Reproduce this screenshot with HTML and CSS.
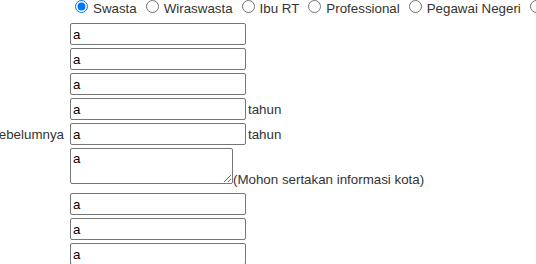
FILE: index.html
```html
<!DOCTYPE html>
<html lang="id">
<head>
<meta charset="utf-8">
<title>Form</title>
<link rel="stylesheet" href="styles.css">
</head>
<body>
<form class="form">
  <div class="label"></div>
  <div class="field radios">
    <label class="opt"><input type="radio" name="job" checked>Swasta</label>
    <label class="opt"><input type="radio" name="job">Wiraswasta</label>
    <label class="opt"><input type="radio" name="job">Ibu RT</label>
    <label class="opt"><input type="radio" name="job">Professional</label>
    <label class="opt"><input type="radio" name="job">Pegawai Negeri</label>
    <label class="opt"><input type="radio" name="job">Lainnya</label>
  </div>

  <div class="label"></div>
  <div class="field"><input class="text" type="text" value="a"></div>

  <div class="label"></div>
  <div class="field"><input class="text" type="text" value="a"></div>

  <div class="label"></div>
  <div class="field"><input class="text" type="text" value="a"></div>

  <div class="label"></div>
  <div class="field"><input class="text" type="text" value="a"><span class="unit">tahun</span></div>

  <div class="label"><span>Lama Bekerja di Perusahaan Sebelumnya</span></div>
  <div class="field"><input class="text" type="text" value="a"><span class="unit">tahun</span></div>

  <div class="label"></div>
  <div class="field area-row"><textarea class="area">a</textarea><span class="note">(Mohon sertakan informasi kota)</span></div>

  <div class="label"></div>
  <div class="field"><input class="text" type="text" value="a"></div>

  <div class="label"></div>
  <div class="field"><input class="text" type="text" value="a"></div>

  <div class="label"></div>
  <div class="field"><input class="text" type="text" value="a"></div>

  <div class="label"></div>
  <div class="field"><input class="text" type="text" value="a"></div>
</form>
</body>
</html>
```
FILE: styles.css
```css
html, body {
  margin: 0;
  padding: 0;
  overflow: hidden;
  background: #fff;
}

body {
  font-family: "Liberation Sans", Arial, sans-serif;
  font-size: 13.333px;
  color: #333;
}

.form {
  display: grid;
  grid-template-columns: 66px auto;
  column-gap: 4px;
  row-gap: 3px;
  margin-top: -3px;
}

.label {
  display: flex;
  justify-content: flex-end;
  align-items: center;
  overflow: hidden;
  white-space: nowrap;
  padding-right: 2px;
}

.field {
  display: flex;
  align-items: center;
  white-space: nowrap;
}

.radios {
  padding-bottom: 4px;
  align-items: baseline;
}

.opt {
  display: inline-flex;
  align-items: baseline;
  margin-right: 4px;
}

.opt input {
  margin: 3px 5px 0 5px;
  flex: none;
}

.text {
  box-sizing: border-box;
  width: 176px;
  height: 22px;
  margin: 0;
  padding: 1px 2px;
  border: 1px solid #767676;
  border-radius: 2px;
  font-family: "Liberation Sans", Arial, sans-serif;
  font-size: 13.333px;
  color: #000;
  background: #fff;
}

.unit {
  margin-left: 2px;
}

.area-row {
  align-items: flex-end;
  padding-bottom: 6px;
}

.area {
  box-sizing: border-box;
  width: 163px;
  height: 36px;
  margin: 0;
  padding: 2px;
  border: 1px solid #767676;
  border-radius: 2px;
  font-family: "Liberation Sans", Arial, sans-serif;
  font-size: 13.333px;
  color: #000;
  line-height: 16px;
}

.note {
  position: relative;
  top: 3px;
}
```
